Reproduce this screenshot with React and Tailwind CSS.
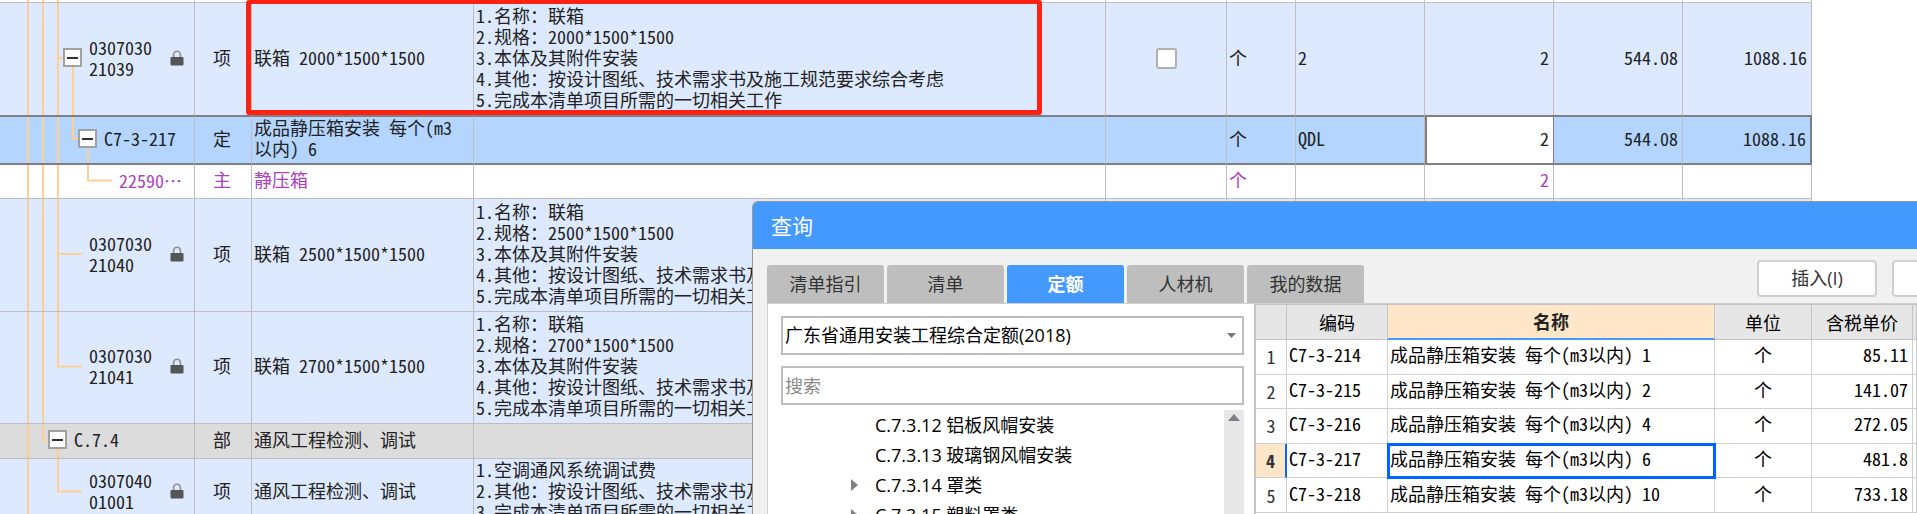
import clsx from "clsx";

const billRows = [
    {
        id: "21039",
        height: "h-[112px]",
        tone: "bg-[#dde9fe]",
        border: "border-[#bebebe]",
        code: "0307030\n21039",
        indent: "pl-[89px]",
        guides: [28, 43, 58],
        branch: { from: 58, to: 63 },
        toggle: 73,
        locked: true,
        type: "项",
        name: "联箱 2000*1500*1500",
        spec: "1.名称：联箱\n2.规格：2000*1500*1500\n3.本体及其附件安装\n4.其他：按设计图纸、技术需求书及施工规范要求综合考虑\n5.完成本清单项目所需的一切相关工作",
        checkbox: true,
        unit: "个",
        expression: "2",
        quantity: "2",
        price: "544.08",
        total: "1088.16",
    },
    {
        id: "C7-3-217",
        height: "h-[50px]",
        tone: "bg-[#b3d5ff]",
        border: "border-[#bebebe] border-y-2 border-y-[#808080]",
        selected: true,
        code: "C7-3-217",
        indent: "pl-[104px]",
        guides: [28, 43, 58],
        branch: { from: 73, to: 78, ends: true },
        toggle: 88,
        type: "定",
        name: "成品静压箱安装 每个(m3\n以内) 6",
        unit: "个",
        expression: "QDL",
        quantity: "2",
        price: "544.08",
        total: "1088.16",
    },
    {
        id: "22590",
        height: "h-[34px]",
        tone: "bg-white text-[#ac3fbd]",
        border: "border-[#bebebe] border-b",
        code: "22590⋯",
        indent: "pl-[119px]",
        guides: [28, 43, 58],
        branch: { from: 88, to: 112, ends: true },
        type: "主",
        name: "静压箱",
        unit: "个",
        quantity: "2",
    },
    {
        id: "21040",
        height: "h-[113px]",
        tone: "bg-[#dde9fe]",
        border: "border-[#bebebe] border-b",
        code: "0307030\n21040",
        indent: "pl-[89px]",
        guides: [28, 43, 58],
        branch: { from: 58, to: 82 },
        locked: true,
        type: "项",
        name: "联箱 2500*1500*1500",
        spec: "1.名称：联箱\n2.规格：2500*1500*1500\n3.本体及其附件安装\n4.其他：按设计图纸、技术需求书及施工规范要求综合考虑\n5.完成本清单项目所需的一切相关工作",
    },
    {
        id: "21041",
        height: "h-[112px]",
        tone: "bg-[#dde9fe]",
        border: "border-[#bebebe] border-b",
        code: "0307030\n21041",
        indent: "pl-[89px]",
        guides: [28, 43],
        branch: { from: 58, to: 82, ends: true },
        locked: true,
        type: "项",
        name: "联箱 2700*1500*1500",
        spec: "1.名称：联箱\n2.规格：2700*1500*1500\n3.本体及其附件安装\n4.其他：按设计图纸、技术需求书及施工规范要求综合考虑\n5.完成本清单项目所需的一切相关工作",
    },
    {
        id: "C.7.4",
        height: "h-[35px]",
        tone: "bg-[#dcdcdc]",
        border: "border-[#bebebe] border-b",
        code: "C.7.4",
        indent: "pl-[74px]",
        guides: [28],
        branch: { from: 43, to: 48, ends: true },
        toggle: 58,
        type: "部",
        name: "通风工程检测、调试",
    },
    {
        id: "01001",
        height: "h-[68px]",
        tone: "bg-[#dde9fe]",
        border: "border-[#bebebe] border-b",
        code: "0307040\n01001",
        indent: "pl-[89px]",
        guides: [28],
        branch: { from: 58, to: 82, ends: true },
        locked: true,
        type: "项",
        name: "通风工程检测、调试",
        spec: "1.空调通风系统调试费\n2.其他：按设计图纸、技术需求书及施工规范要求综合考虑\n3.完成本清单项目所需的一切相关工作",
    },
];

const tabs = ["清单指引", "清单", "定额", "人材机", "我的数据"];

const chapters = [
    { title: "C.7.3.12 铝板风帽安装" },
    { title: "C.7.3.13 玻璃钢风帽安装" },
    { title: "C.7.3.14 罩类", expandable: true },
    { title: "C.7.3.15 塑料罩类", expandable: true },
];

const quotas = [
    { code: "C7-3-214", name: "成品静压箱安装 每个(m3以内) 1", price: "85.11" },
    { code: "C7-3-215", name: "成品静压箱安装 每个(m3以内) 2", price: "141.07" },
    { code: "C7-3-216", name: "成品静压箱安装 每个(m3以内) 4", price: "272.05" },
    { code: "C7-3-217", name: "成品静压箱安装 每个(m3以内) 6", price: "481.8" },
    { code: "C7-3-218", name: "成品静压箱安装 每个(m3以内) 10", price: "733.18" },
];

function LockIcon() {
    return (
        <svg
            className="ml-auto mr-[10px] h-4 w-[14px] shrink-0"
            viewBox="0 0 14 16"
            fill="none"
        >
            <path
                d="M3.6 8V4.6a3.4 3.4 0 0 1 6.8 0V8"
                stroke="#8c8f94"
                strokeWidth="1.6"
            />
            <rect x="0.5" y="7" width="13" height="8.6" rx="1" fill="#555" />
        </svg>
    );
}

// Connector lines of the outline tree, stretched to the height of the row
function TreeLines({ guides, branch, toggle }) {
    return (
        <svg
            className="absolute inset-0 h-full w-full"
            stroke="#fdcf94"
            strokeWidth="2"
        >
            {guides.map((x) => (
                <line key={x} x1={x} x2={x} y1="0" y2="100%" />
            ))}
            {branch && (
                <g transform="translate(0 -1)">
                    {branch.ends && (
                        <line x1={branch.from} x2={branch.from} y1="0" y2="50%" />
                    )}
                    <line x1={branch.from - 1} x2={branch.to} y1="50%" y2="50%" />
                </g>
            )}
            {toggle && <line x1={toggle} x2={toggle} y1="50%" y2="100%" />}
        </svg>
    );
}

function CodeCell({ row, className }) {
    return (
        <td className={clsx("relative px-0 pt-0 pb-[3px]", className)}>
            <TreeLines
                guides={row.guides}
                branch={row.branch}
                toggle={row.toggle}
            />
            <div className={clsx("relative flex items-center", row.indent)}>
                {row.toggle && (
                    <button
                        aria-label="折叠"
                        className="-ml-[26px] mr-[7px] flex h-[19px] w-[19px] shrink-0 items-center justify-center border-2 border-[#a0a0a0] bg-white"
                    >
                        <span className="h-[2px] w-[11px] bg-[#333]" />
                    </button>
                )}
                <span>{row.code}</span>
                {row.locked && <LockIcon />}
            </div>
        </td>
    );
}

function BillTable() {
    return (
        <table className="w-full table-fixed border-separate border-spacing-0 whitespace-pre text-[18px] leading-[21px] text-[#222] [font-feature-settings:'hwid']">
            <colgroup>
                <col className="w-[195px]" />
                <col className="w-[57px]" />
                <col className="w-[222px]" />
                <col />
                <col className="w-[121px]" />
                <col className="w-[69px]" />
                <col className="w-[129px]" />
                <col className="w-[129px]" />
                <col className="w-[129px]" />
                <col className="w-[129px]" />
            </colgroup>
            <tbody>
                <tr className="h-[3px]">
                    <td className="relative border-b border-r border-[#bebebe] p-0">
                        <TreeLines guides={[28, 43, 58]} />
                    </td>
                    {Array.from({ length: 9 }, (_, i) => (
                        <td key={i} className="border-b border-r border-[#bebebe] p-0" />
                    ))}
                </tr>
                {billRows.map((row) => {
                    const cell = clsx("border-r", row.border);
                    const number = clsx(cell, "pt-0 pb-[4px] pl-0 pr-1 text-right");
                    const text = clsx(cell, "pt-0 pb-[4px] pl-[2px] pr-0");
                    return (
                        <tr key={row.id} className={clsx(row.height, row.tone)}>
                            <CodeCell row={row} className={cell} />
                            <td className={clsx(cell, "pt-0 pb-[4px] pl-0 pr-[2px] text-center")}>
                                {row.type}
                            </td>
                            <td className={text}>{row.name}</td>
                            <td className={clsx(text, "overflow-hidden")}>{row.spec}</td>
                            <td className={clsx(cell, "px-0 pt-0 pb-[2px]")}>
                                {row.checkbox && (
                                    <input
                                        type="checkbox"
                                        aria-label="选择"
                                        className="mx-auto block h-[21px] w-[21px] appearance-none rounded-[3px] border-2 border-[#b0b0b0] bg-white"
                                    />
                                )}
                            </td>
                            <td className={text}>{row.unit}</td>
                            <td className={text}>{row.expression}</td>
                            <td
                                className={clsx(
                                    number,
                                    row.selected &&
                                        "border-x-2 border-x-[#808080] bg-white"
                                )}
                            >
                                {row.quantity}
                            </td>
                            <td className={number}>{row.price}</td>
                            <td
                                className={clsx(
                                    number,
                                    row.selected && "border-r-2 border-r-[#808080]"
                                )}
                            >
                                {row.total}
                            </td>
                        </tr>
                    );
                })}
            </tbody>
        </table>
    );
}

function ChapterPanel() {
    return (
        <div className="flex w-[486px] shrink-0 flex-col bg-white pl-[13px] pr-[10px] pt-[12px]">
            <div className="relative">
                <select
                    aria-label="定额库"
                    className="block h-[39px] w-full appearance-none border-2 border-[#bdbdbd] bg-white pl-[2px] text-black"
                >
                    <option>广东省通用安装工程综合定额(2018)</option>
                </select>
                <svg
                    className="pointer-events-none absolute right-[8px] top-[17px] h-[5px] w-[9px]"
                    viewBox="0 0 9 5"
                >
                    <path d="M0 0h9L4.5 5z" fill="#777" />
                </svg>
            </div>
            <input
                type="text"
                aria-label="搜索"
                placeholder="搜索"
                className="mt-[11px] block h-[39px] w-full border-2 border-[#bdbdbd] bg-white pl-[2px] placeholder:text-[#8a8a8a]"
            />
            <div className="mt-[5px] flex flex-1">
                <ul className="flex-1 text-black">
                    {chapters.map((chapter) => (
                        <li
                            key={chapter.title}
                            className="flex h-[30px] items-center pl-[70px]"
                        >
                            <span className="w-6">
                                {chapter.expandable && (
                                    <svg className="h-3 w-[7px]" viewBox="0 0 7 12">
                                        <path d="M0 0v12l7-6z" fill="#808080" />
                                    </svg>
                                )}
                            </span>
                            {chapter.title}
                        </li>
                    ))}
                </ul>
                <div className="w-5 bg-[#e8e8e8] pt-[4px]">
                    <svg className="mx-auto h-[7px] w-3" viewBox="0 0 12 7">
                        <path d="M0 7h12L6 0z" fill="#7d7d85" />
                    </svg>
                </div>
            </div>
        </div>
    );
}

function QuotaTable() {
    const head = "border-b border-r border-[#c4c4c4] bg-[#e6e6e6] p-0 font-normal";
    const cell = "border-b border-r border-[#d0d0d0] px-0 pt-0 pb-[4px]";
    return (
        <table className="h-[208px] w-full table-fixed border-separate border-spacing-0 whitespace-nowrap font-['Noto_Sans_CJK_SC',sans-serif] text-[18px] leading-[21px] text-black [font-feature-settings:'hwid']">
            <colgroup>
                <col className="w-[31px]" />
                <col className="w-[101px]" />
                <col />
                <col className="w-[97px]" />
                <col className="w-[101px]" />
                <col className="w-[4px]" />
            </colgroup>
            <thead>
                <tr className="h-[35px]">
                    <th className={head} />
                    <th className={head}>编码</th>
                    <th className="border-b-2 border-r border-b-[#4499ff] border-r-[#c4c4c4] bg-[#ffe6c9] p-0 font-bold text-[#222]">
                        名称
                    </th>
                    <th className={head}>单位</th>
                    <th className={head}>含税单价</th>
                    <th className={head} />
                </tr>
            </thead>
            <tbody>
                {quotas.map((quota, index) => {
                    const active = quota.code === "C7-3-217";
                    return (
                        <tr key={quota.code}>
                            <td
                                className={clsx(
                                    "border-b border-r border-[#d0d0d0] p-0 text-center text-[#333]",
                                    active &&
                                        "border-r-2 border-r-[#0066ff] bg-[#ffe6c9] font-bold"
                                )}
                            >
                                {index + 1}
                            </td>
                            <td className={clsx(cell, "pl-[2px]")}>{quota.code}</td>
                            <td
                                className={clsx(
                                    cell,
                                    "pl-[2px]",
                                    active &&
                                        "outline-3 -outline-offset-2 outline-[#0066ff]"
                                )}
                            >
                                {quota.name}
                            </td>
                            <td className={clsx(cell, "text-center")}>个</td>
                            <td className={clsx(cell, "pr-[4px] text-right")}>
                                {quota.price}
                            </td>
                            <td className={cell} />
                        </tr>
                    );
                })}
            </tbody>
        </table>
    );
}

function QueryDialog() {
    const button =
        "h-[37px] w-[120px] shrink-0 rounded-[4px] border-2 border-[#cfcfcf] bg-white text-[#333]";
    return (
        <section className="absolute bottom-0 left-[752px] right-0 top-[201px] flex flex-col overflow-hidden rounded-tl-[6px] border-l border-t border-[#999] bg-[#f1f1f1] font-['Open_Sans','Noto_Sans_CJK_SC',sans-serif] text-[18px]">
            <header className="flex h-[47px] shrink-0 items-center bg-[#4499ff] pl-[18px] pt-[2px]">
                <h1 className="text-[21px] text-white">查询</h1>
            </header>
            <div className="flex h-[54px] shrink-0 items-end pl-[14px]">
                <div className="flex gap-[3px]">
                    {tabs.map((tab) => (
                        <button
                            key={tab}
                            className={clsx(
                                "h-[38px] w-[117px] rounded-t-[3px]",
                                tab === "定额"
                                    ? "bg-[#4499ff] font-bold text-white"
                                    : "bg-[#bebebe] text-[#333]"
                            )}
                        >
                            {tab}
                        </button>
                    ))}
                </div>
                <div className="ml-auto flex w-[160px] gap-[15px] self-start pt-[11px]">
                    <button className={button}>插入(I)</button>
                    <button className={button} aria-label="替换" />
                </div>
            </div>
            <div className="ml-[14px] flex flex-1 border-l border-t border-[#d0d0d0]">
                <ChapterPanel />
                <div className="flex-1 border-l-2 border-t border-[#c4c4c4] bg-white">
                    <QuotaTable />
                </div>
            </div>
        </section>
    );
}

export default function App() {
    return (
        <main className="relative h-screen overflow-hidden bg-white font-['Noto_Sans_CJK_SC',sans-serif]">
            <div className="relative pr-[105px]">
                <BillTable />
                {/* Highlight frame around the name and the description */}
                <div className="pointer-events-none absolute left-[246px] right-[875px] top-0 h-[115px] rounded-[3px] border-[5px] border-t-4 border-[#ff2112]" />
            </div>
            <QueryDialog />
        </main>
    );
}
